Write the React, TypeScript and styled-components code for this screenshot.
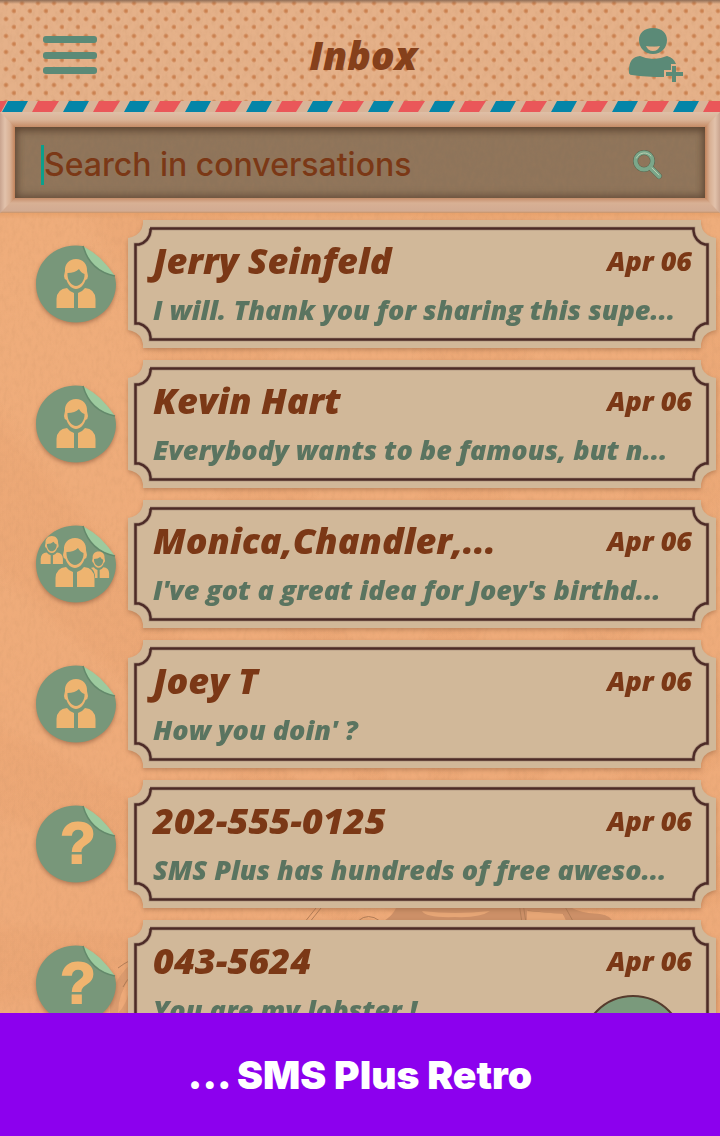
import React from "react";
import styled, { createGlobalStyle } from "styled-components";

const svgUrl = (markup: string) => `url("data:image/svg+xml,${encodeURIComponent(markup)}")`;

/* Fine paper grain, tiled over every paper surface. */
const grain = svgUrl(
  `<svg xmlns="http://www.w3.org/2000/svg" width="240" height="240"><filter id="n" x="0" y="0" width="100%" height="100%"><feTurbulence type="fractalNoise" baseFrequency="0.25 0.12" numOctaves="4" stitchTiles="stitch"/><feColorMatrix values="0 0 0 0 0.45  0 0 0 0 0.22  0 0 0 0 0.1  0.55 0 0 0 -0.2"/></filter><rect width="240" height="240" filter="url(#n)" opacity=".4"/></svg>`
);

const ticketOutline =
  "M15 0H75V4A16 16 0 0 0 86 17L90 18V72L86 73A16 16 0 0 0 75 86V90H15V86A16 16 0 0 0 4 73L0 72V18L4 17A16 16 0 0 0 15 4Z";
const ticketRule =
  "M22 8.5H67.500V11A15 15 0 0 0 79 24.500H81.500V65.500H79A15 15 0 0 0 67.500 79V81.500H22.500V79A15 15 0 0 0 11 65.500H7.500V24.500H11A15 15 0 0 0 22.500 11V8.500Z";

/* Ticket with scooped corners; its edges stretch as a nine-slice border. */
const ticket = svgUrl(
  `<svg xmlns="http://www.w3.org/2000/svg" width="90" height="90"><path d="${ticketOutline}" fill="#d1b899"/><path d="${ticketRule}" fill="none" stroke="#b39a83" stroke-width="4"/><path d="${ticketRule}" fill="none" stroke="#4d2b27" stroke-width="2.500"/></svg>`
);

const display = `"Open Sans", "Liberation Sans", sans-serif`;
const geometric = `"Inter", "Liberation Sans", sans-serif`;
const brown = "#7b3816";
const green = "#5b8a77";

const GlobalStyle = createGlobalStyle`
  * { box-sizing: border-box; }
  body { margin: 0; background: #eba673; }
  button { border: 0; padding: 0; background: none; cursor: pointer; }
`;

const Screen = styled.div`
  display: flex;
  flex-direction: column;
  height: 100vh;
  overflow: hidden;
  font-family: ${display};
`;

const Header = styled.header`
  flex: none;
  display: grid;
  grid-template-columns: 64px 1fr 64px;
  align-items: center;
  height: 101px;
  padding: 8px 32px 0 38px;
  background:
    linear-gradient(#8f6d56, #e0a87f00 4px),
    ${grain},
    radial-gradient(circle at 6px 3px, #cc8250 1px, #cc825000 3px) 0 0 / 16px 33px,
    radial-gradient(circle at 14px 11px, #cc8250 1px, #cc825000 3px) 0 0 / 16px 33px,
    radial-gradient(circle at 6px 19px, #cc8250 1px, #cc825000 3px) 0 0 / 16px 33px,
    radial-gradient(circle at 14px 27px, #cc8250 1px, #cc825000 3px) 0 0 / 16px 33px,
    #e5b189;
`;

const Title = styled.h1`
  margin: 0;
  text-align: center;
  font-size: 39px;
  line-height: 48px;
  font-weight: 800;
  font-style: italic;
  color: #85401b;
`;

const IconButton = styled.button`
  display: flex;
  align-items: center;
  justify-content: center;
  width: 64px;
  height: 64px;

  svg { display: block; }
`;

const AirmailEdge = styled.svg`
  display: block;
  flex: none;
  width: 100%;
  height: 11px;
`;

const Frame = styled.div`
  flex: none;
  position: relative;
  padding: 15px;
  background: linear-gradient(
    90deg,
    #c9a48f, #e2c2ab 5px, #d8b094 10px, #c1825a 15px,
    #c1825a calc(100% - 15px), #d8b094 calc(100% - 10px), #e2c2ab calc(100% - 5px), #c9a48f
  );

  &::before {
    content: "";
    position: absolute;
    inset: 0;
    background: linear-gradient(
      #dfbfa7, #d9b295 8px, #c58c66 15px,
      #c68e6b calc(100% - 15px), #d8b094 calc(100% - 10px), #d2ab92 calc(100% - 2px), #c99368
    );
    clip-path: polygon(
      0 0, 15px 15px, 15px calc(100% - 15px), 0 100%,
      100% 100%, calc(100% - 15px) calc(100% - 15px), calc(100% - 15px) 15px, 100% 0
    );
  }
`;

const SearchWell = styled.form`
  position: relative;
  display: flex;
  align-items: center;
  height: 71px;
  padding: 4px 26px 0;
  background: ${grain}, #8e745a;
  box-shadow: inset 0 3px 8px #5b432f, inset 0 -2px 8px #6b5340;
`;

const SearchInput = styled.input`
  flex: 1;
  min-width: 0;
  height: 40px;
  padding: 0;
  border: 0;
  border-left: 3px solid #0b9f8b;
  outline: 0;
  background: none;
  font: 500 32px/40px ${geometric};
  color: ${brown};

  &::placeholder { color: ${brown}; opacity: 1; }
`;

const Conversations = styled.main`
  position: relative;
  flex: 1;
  min-height: 0;
  overflow: hidden;
  background:
    ${grain},
    linear-gradient(#e8a26c, #e8a26c00 6px),
    repeating-conic-gradient(from 10deg at 60% 92%, #d98e5b00 0 12deg, #d98e5b20 14deg 22deg, #d98e5b00 24deg),
    linear-gradient(#efad7b, #eeaa79);
`;

const Illustration = styled.svg`
  position: absolute;
  left: 110px;
  bottom: 0;
  width: 560px;
  height: 110px;
`;

const List = styled.ul`
  position: relative;
  display: flex;
  flex-direction: column;
  gap: 12px;
  margin: 0;
  padding: 7px 4px 0 36px;
  list-style: none;
`;

const Row = styled.li`
  display: grid;
  grid-template-columns: 80px 1fr;
  align-items: center;
  gap: 12px;
`;

const Card = styled.a`
  display: grid;
  grid-template-columns: 1fr auto;
  align-content: start;
  align-items: center;
  row-gap: 6px;
  min-width: 0;
  height: 128px;
  padding: 18px 24px 0 25px;
  border-image: ${ticket} 30 fill / 30px;
  filter: drop-shadow(0 2px 2px #8a583870);
  text-decoration: none;
  font-weight: 800;
  font-style: italic;
  white-space: nowrap;
  color: ${brown};
`;

const Name = styled.h2`
  margin: 0;
  font-size: 36px;
  line-height: 46px;
  font-weight: inherit;
`;

const When = styled.time`
  font-size: 27px;
  line-height: 46px;
`;

const Preview = styled.p`
  grid-column: 1 / -1;
  margin: 0;
  font-size: 27px;
  line-height: 40px;
  color: #5a7460;
`;

const Avatar = styled.svg`
  display: block;
  width: 80px;
  height: 80px;
  overflow: visible;
  filter: drop-shadow(0 2px 2px #82523890);
`;

const ComposeButton = styled.button`
  && {
    position: absolute;
    right: 35px;
    bottom: -86px;
    width: 104px;
    height: 104px;
    border: 2px solid #563b2d;
    border-radius: 50%;
    background: #7a9a7c;
  }
`;

const Banner = styled.footer`
  flex: none;
  display: flex;
  align-items: center;
  justify-content: center;
  height: 123px;
  background: #8c00ee;
  color: #fff;
  font: 900 39px/48px ${geometric};
`;

type Kind = "person" | "group" | "unknown";

const conversations: { name: string; text: string; kind: Kind }[] = [
  { name: "Jerry Seinfeld", text: "I will. Thank you for sharing this supe...", kind: "person" },
  { name: "Kevin Hart", text: "Everybody wants to be famous, but n...", kind: "person" },
  { name: "Monica,Chandler,...", text: "I've got a great idea for Joey's birthd...", kind: "group" },
  { name: "Joey T", text: "How you doin' ?", kind: "person" },
  { name: "202-555-0125", text: "SMS Plus has hundreds of free aweso...", kind: "unknown" },
  { name: "043-5624", text: "You are my lobster !", kind: "unknown" },
];

const Figure = ({ transform }: { transform?: string }) => (
  <g transform={transform} fill="#eeb470">
    <path
      fillRule="evenodd"
      d="M40 14C33 14 28.500 19 29 26L28 31Q28 34 30.500 35C32 40 36 44 40 44C44 44 48 40 49.500 35Q52 34 52 31L51 26C51.500 19 47 14 40 14ZM31.500 28Q39 28 43 24Q45 28 48.500 29C49 36 44 41 40 41C36 41 31 36 31.500 28Z"
    />
    <path d="M20.500 63V54Q21 44 31 43Q34 47 38 48V63ZM59.500 63V54Q59 44 49 43Q46 47 42 48V63Z" />
  </g>
);

const Sticker = ({ kind }: { kind: Kind }) => (
  <Avatar viewBox="0 -1 80 80" aria-hidden="true">
    <path
      d="M47 1C24-3 0 13 0 39C0 61 18 77.500 40 77.500C63 77.500 80 60 80 39Q80 34 78 30Q59 27 47 1Z"
      fill="#78977a"
    />
    <path d="M47 1Q56 6 64 13Q73 22 79 31Q54 26 47 1Z" fill="#9dca9e" />
    <path d="M47 1Q54 26 79 31" fill="none" stroke="#64896b" strokeWidth="1.500" />
    {kind === "person" && <Figure />}
    {kind === "group" && (
      <>
        <Figure transform="translate(-7 3) scale(.570)" />
        <Figure transform="translate(41 19) scale(.540)" />
        <path d="M19 63V50Q20 42 29 41L27 28Q28 13 39 13Q51 13 51 28L49 41Q58 42 59 50V63Z" fill="#78977a" />
        <Figure transform="translate(-1 -1)" />
      </>
    )}
    {kind === "unknown" && (
      <text
        x="42"
        y="58"
        textAnchor="middle"
        fontFamily="Liberation Sans, sans-serif"
        fontSize="58"
        fontWeight="700"
        fill="#f0b46f"
        stroke="#f0b46f"
        strokeWidth="2"
      >
        ?
      </text>
    )}
  </Avatar>
);

export default function App() {
  return (
    <Screen>
      <GlobalStyle />
      <Header>
        <IconButton aria-label="Menu">
          <svg width="56" height="40" viewBox="0 0 56 40" fill={green}>
            <rect x="1" y="1" width="54" height="7" rx="3" />
            <rect x="1" y="17" width="54" height="7" rx="3" />
            <rect x="1" y="32" width="54" height="7" rx="3" />
          </svg>
        </IconButton>
        <Title>Inbox</Title>
        <IconButton aria-label="Add contact">
          <svg width="56" height="56" viewBox="0 0 56 56" fill={green}>
            <path
              fillRule="evenodd"
              d="M25 1C16 1 11 6 11 13C11 21 17 27 25 27C33 27 39 21 39 13C39 6 34 1 25 1ZM18 19Q25 20 32 19Q30 24 25 24Q20 24 18 19Z"
            />
            <path d="M12 29Q25 35 39 29Q46 31 48 37H43V43H36V50Q18 50 4 48Q0 48 1 43Q1 30 12 29Z" />
            <path d="M44 39H48V45H55V49H48V55H44V49H38V45H44Z" />
          </svg>
        </IconButton>
      </Header>
      <AirmailEdge aria-hidden="true">
        <defs>
          <pattern id="airmail" width="61" height="11" patternUnits="userSpaceOnUse">
            <rect width="61" height="11" fill="#d9b498" />
            <path d="M8 0H28L22 11H2Z" fill="#0485a8" />
            <path d="M38 0H59L52 11H32Z" fill="#ea5759" />
          </pattern>
        </defs>
        <rect width="100%" height="11" fill="url(#airmail)" />
        <path d="M0 0H7L1 11H0Z" fill="#ea5759" />
      </AirmailEdge>
      <Frame>
        <SearchWell role="search">
          <SearchInput type="text" aria-label="Search in conversations" placeholder="Search in conversations" />
          <IconButton type="button" aria-label="Search">
            <svg width="32" height="32" viewBox="0 0 32 32" fill="none" strokeLinecap="round">
              <g stroke="#5b6650" strokeWidth="5">
                <circle cx="13" cy="12" r="8.500" />
                <path d="M20 19L28 27" strokeWidth="6" />
              </g>
              <g stroke="#7ba78a" strokeWidth="4">
                <circle cx="13" cy="12" r="8.500" />
                <path d="M20 19L28 27" strokeWidth="5" />
              </g>
              <path d="M5.500 9A8.500 8.500 0 0 1 20 7M21 19L28 26" stroke="#b9ceb0" strokeWidth="1" />
            </svg>
          </IconButton>
        </SearchWell>
      </Frame>
      <Conversations>
        <Illustration viewBox="0 0 560 110" aria-hidden="true">
          <g fill="#cc9068">
            <path d="M270 20Q286 12 287 0H455Q465 10 490 11Q502 13 503 20Z" />
            <path d="M0 90Q18 56 30 58V110H8Q20 98 22 72Q8 90 8 110H0Z" opacity=".5" />
          </g>
          <g fill="none" stroke="#b27e58">
            <path d="M194 20L210 0M199 20L215 0M248 18Q258 9 270 18M409 0L412 20M413 0L416 20M453 0L464 20M418 8L454 12M8 65Q20 56 30 54M13 84Q20 70 30 70" />
          </g>
          <path d="M312 8Q345 12 380 8Q370 15 345 14Q316 15 312 8ZM417 8L453 11L457 20H417Z" fill="#e6a676" />
        </Illustration>
        <List>
          {conversations.map((c) => (
            <Row key={c.name}>
              <Sticker kind={c.kind} />
              <Card href="#">
                <Name>{c.name}</Name>
                <When>Apr 06</When>
                <Preview>{c.text}</Preview>
              </Card>
            </Row>
          ))}
        </List>
        <ComposeButton aria-label="New message" />
      </Conversations>
      <Banner>... SMS Plus Retro</Banner>
    </Screen>
  );
}
